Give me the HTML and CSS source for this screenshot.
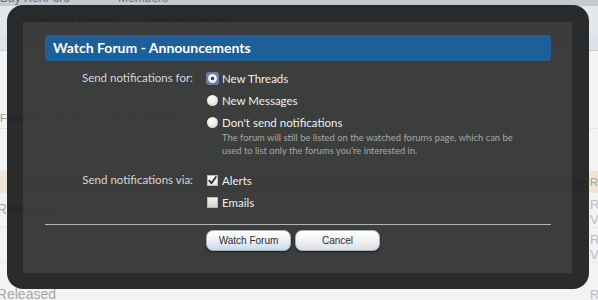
FILE: index.html
```html
<!DOCTYPE html>
<html lang="en">
<head>
<meta charset="utf-8">
<title>Watch Forum - Announcements</title>
<link rel="stylesheet" href="styles.css">
</head>
<body>
<div class="page">
  <div class="nav"><span>Buy XenForo</span><span>Members</span></div>
  <div class="sub"><span>Watched Threads</span><span>Watched Forums</span></div>
  <div class="crumbs"></div>
  <div class="blank"></div>
  <div class="notice"><span>Following forums, you will be notified</span></div>
  <div class="blank2"></div>
  <div class="thead"><span class="th-start">Start Date</span><span class="th-re">Re</span></div>
  <div class="trow"><span class="title">XenForo 1.1.3 Released</span><span class="meta">R<br>V</span></div>
  <div class="trow"><span class="title"></span><span class="meta">R<br>V</span></div>
  <div class="trow last"><span class="title">XenForo 1.1.4 Released</span><span class="meta">R</span></div>
</div>

<div class="modal">
  <div class="panel">
    <h2 class="heading">Watch Forum - Announcements</h2>
    <form class="form">
      <div class="row">
        <div class="label">Send notifications for:</div>
        <div class="opts">
          <label class="opt"><span class="ctl"><span class="ring"><span class="radio on"></span></span></span>New Threads</label>
          <label class="opt"><span class="ctl"><span class="radio"></span></span>New Messages</label>
          <label class="opt"><span class="ctl"><span class="radio"></span></span>Don't send notifications</label>
          <p class="explain">The forum will still be listed on the watched forums page, which can be<br>used to list only the forums you're interested in.</p>
        </div>
      </div>
      <div class="row row2">
        <div class="label">Send notifications via:</div>
        <div class="opts">
          <label class="opt"><span class="ctl"><span class="check on"><svg viewBox="0 0 11 11" width="11" height="11"><path d="M2.3 5.6 L4.4 8.2 L8.9 1.9" fill="none" stroke="#2a2a2a" stroke-width="1.8" stroke-linecap="round" stroke-linejoin="round"/></svg></span></span>Alerts</label>
          <label class="opt"><span class="ctl"><span class="check"></span></span>Emails</label>
        </div>
      </div>
      <hr class="sep">
      <div class="buttons">
        <button type="button" class="btn primary">Watch Forum</button>
        <button type="button" class="btn">Cancel</button>
      </div>
    </form>
  </div>
</div>
</body>
</html>
```

FILE: styles.css
```css
html, body {
  margin: 0;
  padding: 0;
}
body {
  width: 598px;
  height: 300px;
  overflow: hidden;
  position: relative;
  background: #f3f3f3;
  font-family: Lato, "Liberation Sans", sans-serif;
}

/* background page */
.page {
  width: 598px;
  height: 300px;
  display: flex;
  flex-direction: column;
  font-family: "Liberation Sans", sans-serif;
  color: #8a8a8a;
}
.nav {
  height: 6px;
  flex: none;
  overflow: hidden;
  background: #c5cace;
  display: flex;
  align-items: flex-end;
  gap: 48px;
  font-size: 12px;
  color: #6a6f75;
}
.nav span {
  line-height: 16px;
}
.sub {
  height: 29px;
  flex: none;
  background: #e4e8ec;
  display: flex;
  align-items: center;
  gap: 30px;
  padding-left: 30px;
  font-size: 11px;
  color: #b4bac0;
}
.crumbs {
  height: 15px;
  flex: none;
  background: #dce3e9;
  border-bottom: 1px solid #c9d1d8;
}
.blank {
  height: 57px;
  flex: none;
}
.notice {
  height: 20px;
  flex: none;
  display: flex;
  align-items: center;
  font-size: 11px;
  color: #9a9a9a;
  border-bottom: 1px solid #e4e4e4;
}
.blank2 {
  height: 42px;
  flex: none;
}
.thead {
  height: 22px;
  flex: none;
  background: #efe6d7;
  display: flex;
  align-items: center;
  justify-content: flex-end;
  font-size: 11px;
  color: #a89e90;
}
.th-start {
  width: 57px;
}
.th-re {
  width: 8px;
  overflow: hidden;
}
.trow {
  height: 35px;
  flex: none;
  display: flex;
  justify-content: space-between;
  border-bottom: 1px solid #e6e6e6;
  box-sizing: border-box;
}
.trow.last {
  height: 40px;
  align-items: flex-end;
}
.title {
  width: 56px;
  display: flex;
  justify-content: flex-end;
  overflow: hidden;
  white-space: nowrap;
  font-size: 14px;
  color: #a8a8a8;
  padding-top: 8px;
}
.meta {
  width: 8px;
  overflow: hidden;
  font-size: 13px;
  line-height: 15px;
  color: #bcbcbc;
  padding-top: 4px;
}

/* modal */
.modal {
  position: absolute;
  left: 7px;
  top: 5px;
  width: 582px;
  height: 284px;
  box-sizing: border-box;
  padding: 17px 17px 16px 16px;
  border-radius: 16px;
  background: rgba(20, 21, 22, 0.9);
}
.panel {
  height: 100%;
  box-sizing: border-box;
  background: rgba(74, 74, 74, 0.6);
  padding: 13px 21px 0 22px;
}
.heading {
  margin: 0;
  height: 26px;
  box-sizing: border-box;
  border-radius: 4px;
  background: #1d5f96;
  color: #ffffff;
  font-size: 14px;
  font-weight: 700;
  line-height: 26px;
  padding-left: 8px;
}
.form {
  margin: 6px 0 0;
  font-size: 11.5px;
}
.row {
  display: grid;
  grid-template-columns: 148px 1fr;
  column-gap: 14px;
}
.row2 {
  margin-top: 12px;
}
.label {
  text-align: right;
  line-height: 22px;
  color: #d6d6d6;
}
.opts {
  display: flex;
  flex-direction: column;
}
.opt {
  height: 22px;
  display: flex;
  align-items: center;
  color: #efefef;
}
.ctl {
  width: 15px;
  flex: none;
  display: flex;
  align-items: center;
}
.radio {
  width: 11px;
  height: 11px;
  border-radius: 50%;
  box-sizing: border-box;
  background: radial-gradient(circle at 40% 35%, #ffffff 0%, #ececec 45%, #bdbdbd 100%);
  display: flex;
  align-items: center;
  justify-content: center;
}
.ring {
  width: 13px;
  height: 13px;
  margin-left: -1px;
  box-sizing: border-box;
  border-radius: 3px;
  background: #6b7ca4;
  display: flex;
  align-items: center;
  justify-content: center;
}
.radio.on {
  width: 9px;
  height: 9px;
  background: radial-gradient(circle, #4a4a4a 0 1.6px, #f4f4f4 2.2px, #e2e2e2 100%);
}
.check {
  width: 11px;
  height: 11px;
  box-sizing: border-box;
  background: linear-gradient(#f2f2f2, #d2d2d2);
  border: 1px solid #b9b9b9;
  display: flex;
  align-items: center;
  justify-content: center;
}
.check svg {
  display: block;
  flex: none;
}
.check.on {
  background: linear-gradient(#ffffff, #e6e6e6);
}
.explain {
  margin: -2px 0 0 15px;
  font-size: 9.4px;
  line-height: 13px;
  color: #a8a8a8;
}
.sep {
  margin: 11px 0 0;
  border: 0;
  height: 1px;
  background: #b4b4b4;
}
.buttons {
  margin: 5px 0 0 161px;
  display: flex;
  gap: 4px;
}
.btn {
  width: 85px;
  height: 21px;
  box-sizing: border-box;
  border: 1px solid #a9b0ba;
  border-radius: 7px;
  padding: 0;
  font-family: "Liberation Sans", sans-serif;
  font-size: 10px;
  color: #2c2c2c;
  background: linear-gradient(#ffffff 0%, #f4f4f6 45%, #dcdde2 100%);
  box-shadow: 0 1px 2px rgba(0, 0, 0, 0.55);
}
.btn.primary {
  background: linear-gradient(#ffffff 0%, #eef3f9 45%, #c9d9ea 100%);
}
```
